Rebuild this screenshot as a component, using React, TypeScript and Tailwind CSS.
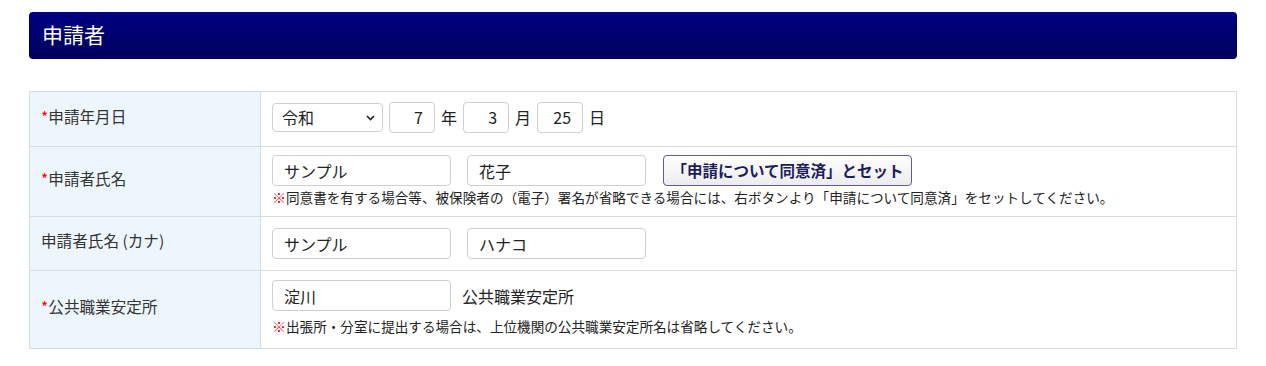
import { ReactNode } from "react";

const font = { fontFamily: '"Noto Sans CJK JP", "Noto Sans", sans-serif' };

const inputBox =
  "h-[31px] rounded-[4px] border border-[#cfcfcf] bg-white px-[11px] text-[16px] text-[#222] outline-none";

const Label = ({ required, children }: { required?: boolean; children: ReactNode }) => (
  <td className="w-[231px] border border-[#d8dce0] bg-[#edf5fd] pl-[11px] pb-[5px] align-middle text-[15.6px] text-[#333]">
    {required && <span className="text-[#f00]">*</span>}
    {children}
  </td>
);

const Note = ({ children, className = "" }: { children: ReactNode; className?: string }) => (
  <p className={`text-[13.6px] leading-[18px] text-[#222] ${className}`}>
    <span className="text-[#e60000] font-black text-[14px]">※</span>
    {children}
  </p>
);

export default function App() {
  return (
    <div className="bg-white px-[29px] pt-[12px] w-[1266px] h-[366px]" style={font}>
      <div className="h-[47px] rounded-[4px] bg-gradient-to-b from-[#000082] to-[#00005c] pl-[13px] flex items-center">
        <h2 className="text-[21px] text-white leading-none pb-[3px]">申請者</h2>
      </div>

      <table className="mt-[32px] w-full border-collapse border border-[#d8dce0]">
        <tbody>
          <tr className="h-[55px]">
            <Label required>申請年月日</Label>
            <td className="border border-[#d8dce0] pl-[11px] pb-[4px] align-middle">
              <div className="flex items-center gap-[6px] text-[16px] text-[#222]">
                <div className="relative">
                  <select
                    defaultValue="令和"
                    className="h-[29px] w-[111px] appearance-none rounded-[4px] border border-[#cfcfcf] bg-white pl-[9px] text-[16px] text-[#222] outline-none"
                    style={font}
                  >
                    <option>令和</option>
                    <option>平成</option>
                  </select>
                  <svg
                    className="pointer-events-none absolute right-[8px] top-[12px]"
                    width="9"
                    height="6"
                    viewBox="0 0 9 6"
                  >
                    <path d="M1 1l3.5 3.5L8 1" fill="none" stroke="#222" strokeWidth="1.6" />
                  </svg>
                </div>
                <input className={`${inputBox} w-[46px] text-right`} defaultValue="7" style={font} />
                <span>年</span>
                <input className={`${inputBox} w-[46px] text-right`} defaultValue="3" style={font} />
                <span>月</span>
                <input className={`${inputBox} w-[46px] text-right`} defaultValue="25" style={font} />
                <span>日</span>
              </div>
            </td>
          </tr>

          <tr className="h-[70px]">
            <Label required>申請者氏名</Label>
            <td className="border border-[#d8dce0] pl-[11px] align-top pt-[8px]">
              <div className="flex items-center">
                <input className={`${inputBox} w-[179px]`} defaultValue="サンプル" style={font} />
                <input className={`${inputBox} ml-[16px] w-[179px]`} defaultValue="花子" style={font} />
                <button
                  className="ml-[17px] h-[31px] w-[249px] rounded-[4px] border border-[#5b5b96] bg-gradient-to-b from-white to-[#ececec] text-[15.5px] font-bold text-[#1c1c5e]"
                  style={font}
                >
                  「申請について同意済」とセット
                </button>
              </div>
              <Note className="mt-[2px]">
                同意書を有する場合等、被保険者の（電子）署名が省略できる場合には、右ボタンより「申請について同意済」をセットしてください。
              </Note>
            </td>
          </tr>

          <tr className="h-[54px]">
            <Label>申請者氏名 (カナ)</Label>
            <td className="border border-[#d8dce0] pl-[11px] align-middle">
              <div className="flex items-center">
                <input className={`${inputBox} w-[179px]`} defaultValue="サンプル" style={font} />
                <input className={`${inputBox} ml-[16px] w-[179px]`} defaultValue="ハナコ" style={font} />
              </div>
            </td>
          </tr>

          <tr className="h-[78px]">
            <Label required>公共職業安定所</Label>
            <td className="border border-[#d8dce0] pl-[11px] align-top pt-[9px]">
              <div className="flex items-center">
                <input className={`${inputBox} w-[179px]`} defaultValue="淀川" style={font} />
                <span className="ml-[11px] text-[16px] text-[#222]">公共職業安定所</span>
              </div>
              <Note className="mt-[6px]">
                出張所・分室に提出する場合は、上位機関の公共職業安定所名は省略してください。
              </Note>
            </td>
          </tr>
        </tbody>
      </table>
    </div>
  );
}
